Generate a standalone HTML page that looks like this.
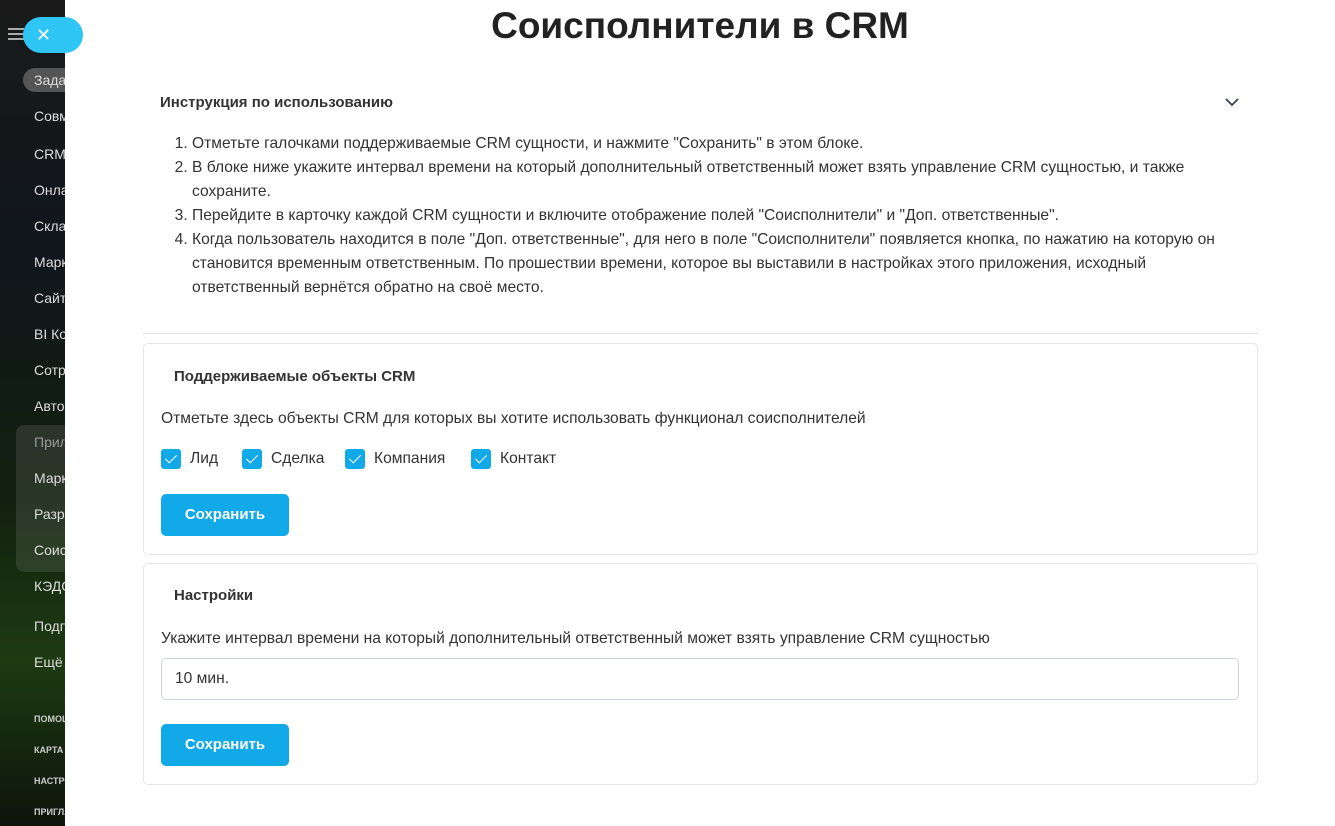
<!DOCTYPE html>
<html><head><meta charset="utf-8"><style>
*{box-sizing:border-box;margin:0;padding:0}
body{width:1335px;height:826px;overflow:hidden;font-family:"Liberation Sans",sans-serif;color:#333;background:#fff;position:relative}
.side{position:absolute;left:0;top:0;width:65px;height:826px;background:linear-gradient(180deg,#1a1a1a 0%,#10161c 30%,#12200f 60%,#1d3a12 80%,#0d140c 100%);overflow:hidden}
.side .it{position:absolute;left:34px;color:#ddd;font-size:14px;white-space:nowrap}
.side .sm{position:absolute;left:34px;color:#ccc;font-size:9px;font-weight:bold;white-space:nowrap}
.close{position:absolute;left:23px;top:17px;width:60px;height:36px;border-radius:18px;background:#2fc6f6;color:#fff;font-size:18px;line-height:36px;padding-left:13px;z-index:2}
.main{position:absolute;left:65px;top:0;right:0;height:826px;background:#fff}
h1{position:absolute;left:0;right:0;top:5px;text-align:center;font-size:37px;font-weight:bold;color:#222}
.ins{position:absolute;left:160px;top:94px;font-size:15px;font-weight:bold;color:#333}
.chev{position:absolute;left:1224px;top:96px}
ol{position:absolute;left:192px;top:132px;width:1030px;font-size:15.6px;line-height:24px;color:#333}
.hr{position:absolute;left:143px;width:1115px;top:333px;border-top:1px solid #dee2e6}
.card{position:absolute;left:143px;width:1115px;border:1px solid #e3e6ea;border-radius:5px}
.ct{position:absolute;left:30px;font-size:15px;font-weight:bold;color:#333}
.tx{position:absolute;left:17px;font-size:15.6px;color:#333;white-space:nowrap}
.btn{position:absolute;left:17px;width:128px;height:42px;border-radius:5px;background:#11a9e8;color:#fff;font-weight:bold;font-size:15px;text-align:center;line-height:42px}
.cb{position:absolute;top:105px;font-size:15.6px;display:flex;align-items:center;gap:9px}
.cb i{display:inline-block;width:20px;height:20px;background:#11a9e8;border-radius:3px;position:relative}
.cb i:after{content:"";position:absolute;left:7px;top:3px;width:5px;height:10px;border:solid #fff;border-width:0 1.5px 1.5px 0;transform:rotate(45deg)}
.inp{position:absolute;left:17px;top:94px;width:1078px;height:42px;border:1px solid #ced4da;border-radius:5px;padding-left:13px;line-height:40px;font-size:15.6px;color:#333}
</style></head><body>
<div class="side">
<div style="position:absolute;left:8px;top:28px;width:16px;height:2px;background:#aaa;box-shadow:0 5px 0 #aaa,0 10px 0 #aaa"></div>
<div style="position:absolute;left:23px;top:68px;width:60px;height:24px;border-radius:12px;background:#555"></div>
<div style="position:absolute;left:16px;top:425px;width:60px;height:147px;border-radius:8px;background:rgba(255,255,255,.1)"></div>
<div class="it" style="top:72px">Задачи</div>
<div class="it" style="top:108px">Совместная</div>
<div class="it" style="top:146px">CRM</div>
<div class="it" style="top:182px">Онлайн</div>
<div class="it" style="top:218px">Склад</div>
<div class="it" style="top:254px">Маркетинг</div>
<div class="it" style="top:290px">Сайты</div>
<div class="it" style="top:326px">BI Конструктор</div>
<div class="it" style="top:362px">Сотрудники</div>
<div class="it" style="top:398px">Автоматизация</div>
<div class="it" style="top:434px;color:#999">Приложения</div>
<div class="it" style="top:470px">Маркет</div>
<div class="it" style="top:506px">Разработчикам</div>
<div class="it" style="top:542px">Соисполнители</div>
<div class="it" style="top:578px">КЭДО</div>
<div class="it" style="top:618px">Подписка</div>
<div class="it" style="top:654px">Ещё</div>
<div class="sm" style="top:714px">ПОМОЩЬ</div>
<div class="sm" style="top:745px">КАРТА</div>
<div class="sm" style="top:776px">НАСТРОЙКИ</div>
<div class="sm" style="top:807px">ПРИГЛАСИТЬ</div>
</div>
<div class="close">✕</div>
<div class="main"></div>
<h1 style="left:65px">Соисполнители в CRM</h1>
<div class="ins">Инструкция по использованию</div>
<svg class="chev" width="16" height="12" viewBox="0 0 16 12"><path d="M2 3 L8 9 L14 3" fill="none" stroke="#3a4250" stroke-width="1.8"/></svg>
<ol>
<li>Отметьте галочками поддерживаемые CRM сущности, и нажмите "Сохранить" в этом блоке.</li>
<li>В блоке ниже укажите интервал времени на который дополнительный ответственный может взять управление CRM сущностью, и также сохраните.</li>
<li>Перейдите в карточку каждой CRM сущности и включите отображение полей "Соисполнители" и "Доп. ответственные".</li>
<li>Когда пользователь находится в поле "Доп. ответственные", для него в поле "Соисполнители" появляется кнопка, по нажатию на которую он становится временным ответственным. По прошествии времени, которое вы выставили в настройках этого приложения, исходный ответственный вернётся обратно на своё место.</li>
</ol>
<div class="hr"></div>
<div class="card" style="top:343px;height:212px">
<div class="ct" style="top:24px">Поддерживаемые объекты CRM</div>
<div class="tx" style="top:66px">Отметьте здесь объекты CRM для которых вы хотите использовать функционал соисполнителей</div>
<div class="cb" style="left:17px"><i></i>Лид</div>
<div class="cb" style="left:98px"><i></i>Сделка</div>
<div class="cb" style="left:201px"><i></i>Компания</div>
<div class="cb" style="left:327px"><i></i>Контакт</div>
<div class="btn" style="top:150px">Сохранить</div>
</div>
<div class="card" style="top:563px;height:222px">
<div class="ct" style="top:23px">Настройки</div>
<div class="tx" style="top:66px">Укажите интервал времени на который дополнительный ответственный может взять управление CRM сущностью</div>
<div class="inp">10 мин.</div>
<div class="btn" style="top:160px">Сохранить</div>
</div>
</body></html>
